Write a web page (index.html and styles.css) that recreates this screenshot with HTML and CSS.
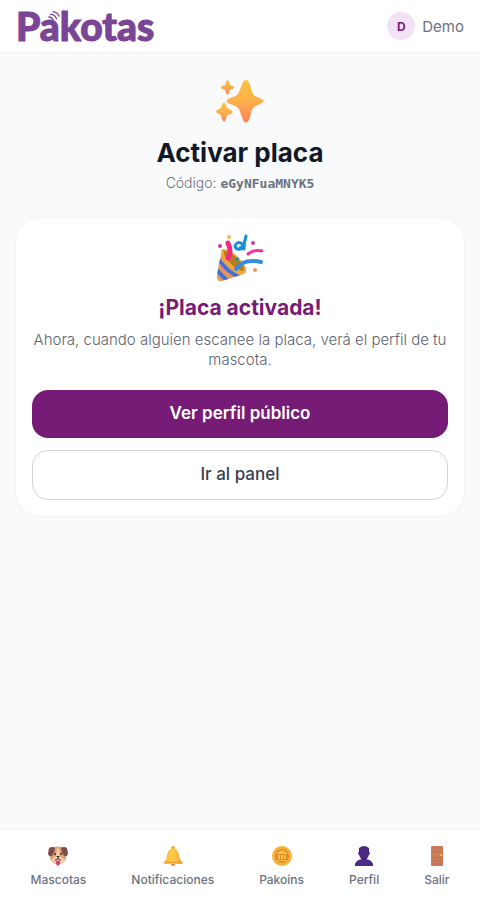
FILE: index.html
```html
<!DOCTYPE html>
<html lang="es">
<head>
  <meta charset="UTF-8">
  <meta name="viewport" content="width=device-width, initial-scale=1.0">
  <title>Activar placa - Pakotas</title>
  <link rel="stylesheet" href="styles.css">
</head>
<body>
  <header class="topbar">
    <a class="logo" href="#" aria-label="Pakotas">
      Pakotas
      <svg class="logo-waves" viewBox="0 0 14 14" fill="none" stroke="currentColor" stroke-width="1.5" stroke-linecap="round" aria-hidden="true">
        <path d="M1 7Q5 7 6 11M3 4Q8 4 10 9M6 1Q11 1 13 6"/>
      </svg>
    </a>
    <a class="user" href="#">
      <span class="avatar">D</span>
      <span>Demo</span>
    </a>
  </header>

  <main class="content">
    <svg class="hero-icon" viewBox="0 0 48 48" aria-hidden="true">
      <defs>
        <linearGradient id="star" x1="0" y1="0" x2="0" y2="1">
          <stop offset="0" stop-color="#f9c23c"/>
          <stop offset="0.5" stop-color="#fcb04c"/>
          <stop offset="1" stop-color="#ff8257"/>
        </linearGradient>
      </defs>
      <g fill="url(#star)">
        <path d="M27 5Q30 1 33 5L37 17Q38 19 41 20L46 22Q49 24 46 26L40 29Q37 30 36 33L33 43Q30 48 27 43L23 32Q22 30 19 29L12 26Q9 24 12 22L19 19Q22 18 23 15Z"/>
        <path d="M10 5Q11.500 1 13 5L14 8L17 9Q19 10 17 12L14 13L13 16Q11.500 19 10 16L9 13L6 12Q4 10 6 9L9 8Z"/>
        <path d="M6 28Q8 23 10 28L11 31L15 33Q18 35 15 37L11 38L10 42Q8 47 6 42L5 38L1 36Q-1 34 1 33L5 31Z"/>
      </g>
    </svg>
    <h1>Activar placa</h1>
    <p class="code-line">Código: <code>eGyNFuaMNYK5</code></p>

    <section class="card">
      <svg class="card-icon" viewBox="0 0 48 48" fill="none" stroke-linecap="round" aria-hidden="true">
        <defs>
          <linearGradient id="cone" x1="0" y1="0" x2="1" y2="0">
            <stop offset="0" stop-color="#dc9c50"/>
            <stop offset="1" stop-color="#f5ac45"/>
          </linearGradient>
          <clipPath id="coneShape">
            <path d="M6 17Q2 32 1 43Q1 48 6 47L28 40Q32 37 24 30Q15 20 6 17Z"/>
          </clipPath>
        </defs>
        <g clip-path="url(#coneShape)">
          <path d="M0 14H32V48H0Z" fill="url(#cone)"/>
          <path d="M2 25Q10 37 23 43M0 35Q6 42 14 49" stroke="#426fda" stroke-width="4"/>
          <path d="M3 30Q10 40 18 46" stroke="#ee8a69" stroke-width="2"/>
        </g>
        <path d="M6 15Q13 14 23 24Q33 34 29 39Q22 41 12 30Q3 20 6 15Z" fill="#f2a73d"/>
        <path d="M8 17Q14 17 22 25Q30 34 27 37Q21 36 13 28Q7 21 8 17Z" fill="#b77b1d"/>
        <path d="M12 24Q16 18 12 9" stroke="#f52982" stroke-width="5"/>
        <path d="M20 35Q27 24 45 28" stroke="#368edb" stroke-width="4"/>
        <path d="M30 2Q28 8 28 15M28 11C26 17 19 16 19 12Q21 7 25 9Q29 12 24 14" stroke="#178fd4" stroke-width="3"/>
        <path d="M32 20Q38 15 46 17" stroke="#ed359c" stroke-width="3"/>
        <circle cx="4" cy="12" r="2" fill="#ca3b99"/>
        <circle cx="37" cy="9" r="2" fill="#ca3b99"/>
        <circle cx="13" cy="3" r="2" fill="#e9bd4c"/>
        <circle cx="39" cy="36" r="2" fill="#ec9c4e"/>
        <circle cx="21" cy="25" r="2" fill="#368caf"/>
      </svg>
      <h2>¡Placa activada!</h2>
      <p>Ahora, cuando alguien escanee la placa, verá el perfil de tu mascota.</p>
      <div class="actions">
        <button class="btn btn-primary" type="button">Ver perfil público</button>
        <button class="btn btn-outline" type="button">Ir al panel</button>
      </div>
    </section>
  </main>

  <nav class="tabbar">
    <a href="#">
      <svg viewBox="0 0 20 20" aria-hidden="true">
        <path d="M5 1Q10 0 15 1Q18 8 18 12Q17 17 12 18H8Q3 17 2 12Q2 7 5 1Z" fill="#dfa06f"/>
        <path d="M1 2Q4 0 7 2Q7 6 4 10Q1 11 0 8ZM19 2Q16 0 13 2Q13 6 16 10Q19 11 20 8Z" fill="#7b4d4c"/>
        <path d="M9 3Q10 1 11 3L12 10L17 14Q15 18 10 17Q5 18 3 14L8 10Z" fill="#f2cda7"/>
        <circle cx="7" cy="8" r="1" fill="#402a32"/>
        <circle cx="13" cy="8" r="1" fill="#402a32"/>
        <path d="M8 10H12L10 12Z" fill="#402a32"/>
        <path d="M7 14Q9 15 10 12Q11 15 13 14" fill="none" stroke="#402a32" stroke-width="1"/>
        <path d="M8 15H12V17Q12 19 10 20Q8 19 8 17Z" fill="#dd3879"/>
      </svg>
      <span>Mascotas</span>
    </a>
    <a href="#">
      <svg viewBox="0 0 20 20" aria-hidden="true">
        <defs>
          <linearGradient id="bell">
            <stop offset="0" stop-color="#f9bb37"/>
            <stop offset="0.5" stop-color="#ffcd45"/>
            <stop offset="1" stop-color="#ed9b36"/>
          </linearGradient>
        </defs>
        <circle cx="10" cy="2" r="2" fill="#efa436"/>
        <circle cx="10" cy="18" r="2" fill="#df803b"/>
        <path d="M10 2Q15 3 16 9Q16 13 19 16Q21 18 18 18H2Q-1 18 1 16Q4 13 4 9Q5 3 10 2Z" fill="url(#bell)"/>
        <path d="M2 16Q10 17 18 16" stroke="#e89c30" stroke-width="1" fill="none"/>
      </svg>
      <span>Notificaciones</span>
    </a>
    <a href="#">
      <svg viewBox="0 0 20 20" aria-hidden="true">
        <circle cx="10" cy="10" r="10" fill="#f9b13c"/>
        <circle cx="10" cy="10" r="7" fill="#d98d2c"/>
        <path d="M5 7L10 4L15 7V8H5ZM6 9H8V13H6ZM9 9H11V13H9ZM12 9H14V13H12ZM5 14H15V15H5Z" fill="#fcbf42"/>
      </svg>
      <span>Pakoins</span>
    </a>
    <a href="#">
      <svg viewBox="0 0 20 20" aria-hidden="true">
        <path d="M5 2Q10 -2 15 2V6Q17 6 15 9Q14 12 12 13Q18 14 19 18V20H1V18Q2 14 8 13Q6 12 5 9Q3 6 5 6Z" fill="#4b2b86"/>
        <path d="M7 12Q10 14 13 12" stroke="#321b60" stroke-width="1" fill="none"/>
      </svg>
      <span>Perfil</span>
    </a>
    <a href="#">
      <svg viewBox="0 0 20 20" aria-hidden="true">
        <rect x="4" y="0" width="12" height="20" rx="1" fill="#cd7d58"/>
        <path d="M5 2H15M5 6H15M5 12H15M5 15H15M5 18H15" stroke="#bd7150" stroke-width="1"/>
        <circle cx="14" cy="9" r="1" fill="#f9c23c"/>
      </svg>
      <span>Salir</span>
    </a>
  </nav>
</body>
</html>
```
FILE: styles.css
```css
:root {
  --brand: #771c76;
  --logo: #7a4594;
  --bg: #f9fafc;
  --text: #111827;
  --muted: #6b7280;
  --line: #f0f2f5;
}

* {
  box-sizing: border-box;
}

body {
  margin: 0;
  min-height: 100vh;
  display: flex;
  flex-direction: column;
  background: var(--bg);
  color: var(--text);
  font-family: Inter, "Open Sans", sans-serif;
}

a {
  color: inherit;
  text-decoration: none;
}

h1, h2, p {
  margin: 0;
}

/* Header */
.topbar {
  display: flex;
  justify-content: space-between;
  align-items: center;
  height: 53px;
  padding: 0 16px;
  background: #fff;
  border-bottom: 1px solid var(--line);
}

.logo {
  position: relative;
  color: var(--logo);
  font-family: Lato, sans-serif;
  font-size: 39px;
  font-weight: 900;
  line-height: 52px;
  -webkit-text-stroke: 1px var(--logo);
}

.logo-waves {
  position: absolute;
  top: 11px;
  left: 32px;
  width: 12px;
  height: 12px;
}

.user {
  display: flex;
  align-items: center;
  gap: 7px;
  color: var(--muted);
  font-size: 15px;
  font-weight: 400;
}

.avatar {
  display: flex;
  align-items: center;
  justify-content: center;
  width: 28px;
  height: 28px;
  border-radius: 50%;
  background: #f3e2f5;
  color: var(--brand);
  font-size: 12px;
  font-weight: 700;
}

/* Main */
.content {
  flex: 1;
  padding: 24px 16px;
  text-align: center;
}

.hero-icon,
.card-icon {
  display: block;
  width: 48px;
  height: 48px;
  margin: 0 auto 12px;
}

h1 {
  font-size: 26px;
  line-height: 32px;
  font-weight: 700;
}

.code-line {
  margin-top: 4px;
  color: var(--muted);
  font-size: 14px;
  line-height: 20px;
  font-weight: 300;
}

.code-line code {
  font-family: "DejaVu Sans Mono", monospace;
  font-size: 13px;
  font-weight: 700;
}

.card {
  margin-top: 24px;
  padding: 16px;
  background: #fff;
  border-radius: 24px;
  box-shadow: 0 0 0 1px var(--line);
}

.card h2 {
  color: var(--brand);
  font-size: 21px;
  line-height: 28px;
  font-weight: 700;
}

.card p {
  margin-top: 8px;
  color: #5b6470;
  font-size: 15px;
  line-height: 20px;
  font-weight: 300;
}

.actions {
  display: grid;
  gap: 12px;
  margin-top: 20px;
}

.btn {
  height: 48px;
  padding: 0 16px 2px;
  border: 0;
  border-radius: 16px;
  font-family: inherit;
  font-size: 17px;
  font-weight: 600;
  cursor: pointer;
}

.btn-primary {
  background: var(--brand);
  color: #fff;
}

.btn-outline {
  height: 50px;
  background: #fff;
  border: 1px solid #d1d5db;
  color: #374151;
  font-weight: 500;
}

/* Bottom navigation */
.tabbar {
  position: sticky;
  bottom: 0;
  display: flex;
  justify-content: space-around;
  padding: 16px 8px 12px;
  background: #fff;
  border-top: 1px solid var(--line);
}

.tabbar a {
  display: flex;
  flex-direction: column;
  align-items: center;
  gap: 6px;
  color: var(--muted);
  font-size: 12px;
  line-height: 16px;
  font-weight: 500;
}

.tabbar svg {
  width: 20px;
  height: 20px;
}
```
